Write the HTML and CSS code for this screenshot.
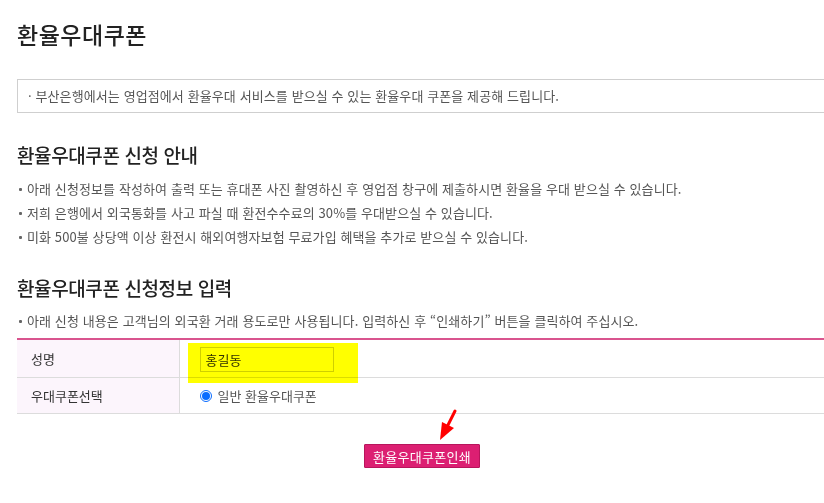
FILE: index.html
```html
<!DOCTYPE html>
<html lang="ko">
<head>
<meta charset="utf-8">
<link rel="stylesheet" href="styles.css">
</head>
<body>
<div class="page">
  <h1 class="title">환율우대쿠폰</h1>
  <div class="notice">· 부산은행에서는 영업점에서 환율우대 서비스를 받으실 수 있는 환율우대 쿠폰을 제공해 드립니다.</div>

  <h2 class="sub">환율우대쿠폰 신청 안내</h2>
  <ul class="bullets">
    <li>아래 신청정보를 작성하여 출력 또는 휴대폰 사진 촬영하신 후 영업점 창구에 제출하시면 환율을 우대 받으실 수 있습니다.</li>
    <li>저희 은행에서 외국통화를 사고 파실 때 환전수수료의 30%를 우대받으실 수 있습니다.</li>
    <li>미화 500불 상당액 이상 환전시 해외여행자보험 무료가입 혜택을 추가로 받으실 수 있습니다.</li>
  </ul>

  <h2 class="sub sub2">환율우대쿠폰 신청정보 입력</h2>
  <ul class="bullets bullets2">
    <li>아래 신청 내용은 고객님의 외국환 거래 용도로만 사용됩니다. 입력하신 후 “인쇄하기” 버튼을 클릭하여 주십시오.</li>
  </ul>

  <table class="form">
    <tr class="r1">
      <th>성명</th>
      <td><div class="input">홍길동</div></td>
    </tr>
    <tr class="r2">
      <th>우대쿠폰선택</th>
      <td><label class="radio"><span class="dot"></span>일반 환율우대쿠폰</label></td>
    </tr>
  </table>

  <div class="actions">
    <button class="print">환율우대쿠폰인쇄</button>
  </div>
</div>

<div class="highlight"></div>
<svg class="arrow" width="30" height="40" viewBox="0 0 30 40">
  <line x1="19" y1="3" x2="12" y2="17" stroke="#ff0000" stroke-width="3" stroke-linecap="round"/>
  <polygon points="4,32 6,14 18,20" fill="#ff0000"/>
</svg>
</body>
</html>
```

FILE: styles.css
```css
html, body {
  margin: 0;
  padding: 0;
  background: #fff;
  overflow: hidden;
}
body {
  width: 824px;
  height: 503px;
  position: relative;
  font-family: "Noto Sans CJK KR", "Noto Sans", sans-serif;
  color: #555;
}
.page {
  margin-left: 17px;
  width: 810px;
  padding-top: 18px;
}
.title {
  margin: 0;
  font-size: 23px;
  font-weight: 500;
  color: #222;
  line-height: 32px;
  letter-spacing: 0.5px;
}
.notice {
  margin-top: 29px;
  height: 32px;
  border: 1px solid #cfcfcf;
  box-sizing: content-box;
  font-size: 13px;
  letter-spacing: 0.1px;
  line-height: 32px;
  padding-left: 10px;
  color: #555;
}
.sub {
  margin: 29px 0 0;
  font-size: 19px;
  letter-spacing: -0.4px;
  font-weight: 500;
  color: #222;
  line-height: 26px;
}
.sub2 {
  margin-top: 26px;
}
.bullets {
  list-style: none;
  margin: 9px 0 0;
  padding: 0;
}
.bullets2 {
  margin-top: 8px;
}
.bullets li {
  position: relative;
  padding-left: 10px;
  font-size: 13px;
  letter-spacing: 0.1px;
  line-height: 24px;
  color: #555;
}
.bullets li::before {
  content: "";
  position: absolute;
  left: 2px;
  top: 11px;
  width: 3px;
  height: 3px;
  border-radius: 1px;
  background: #666;
}
.form {
  margin-top: 5px;
  width: 100%;
  border-collapse: collapse;
  border-top: 2px solid #d9548e;
}
.form th {
  width: 162px;
  box-sizing: border-box;
  background: #fcf5fc;
  border-right: 1px solid #dcdcdc;
  border-bottom: 1px solid #dcdcdc;
  text-align: left;
  font-weight: 400;
  font-size: 13px;
  color: #333;
  padding: 0 0 0 14px;
}
.form td {
  border-bottom: 1px solid #dcdcdc;
  padding: 0 0 0 20px;
  font-size: 13px;
}
.r1 th, .r1 td { height: 37px; }
.r2 th, .r2 td { height: 35px; }
.input {
  width: 134px;
  height: 25px;
  border: 1px solid #cfcfcf;
  box-sizing: border-box;
  line-height: 23px;
  padding-left: 5px;
  color: #333;
  font-size: 13px;
  margin-top: 1px;
}
.radio {
  display: flex;
  align-items: center;
  gap: 6px;
  color: #555;
  margin-left: 0;
}
.dot {
  width: 12px;
  height: 12px;
  border-radius: 50%;
  border: 1px solid #0a6cff;
  box-sizing: border-box;
  display: flex;
  align-items: center;
  justify-content: center;
}
.dot::after {
  content: "";
  width: 8px;
  height: 8px;
  border-radius: 50%;
  background: #0a6cff;
}
.actions {
  display: flex;
  justify-content: center;
  margin-top: 30px;
}
.print {
  width: 116px;
  height: 24px;
  border: 1px solid #b8155c;
  border-radius: 1px;
  background: #dc1f72;
  color: #fff;
  font-family: "Noto Sans CJK KR", sans-serif;
  font-size: 13px;
  padding: 0;
  letter-spacing: 0.3px;
}
.highlight {
  position: absolute;
  left: 188px;
  top: 343px;
  width: 170px;
  height: 40px;
  background: #ffff00;
  mix-blend-mode: multiply;
}
.arrow {
  position: absolute;
  left: 436px;
  top: 408px;
}
```
